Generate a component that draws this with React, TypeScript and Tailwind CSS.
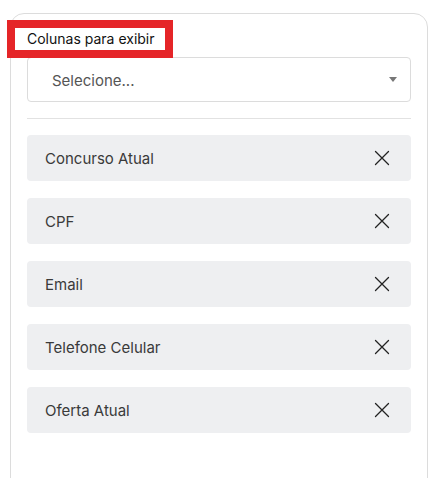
import React from "react";

const items = ["Concurso Atual", "CPF", "Email", "Telefone Celular", "Oferta Atual"];

function XIcon() {
  return (
    <svg width="16" height="16" viewBox="0 0 16 16" fill="none" stroke="#222" strokeWidth="1.3" strokeLinecap="round">
      <path d="M1.5 1.5 L14.5 14.5 M14.5 1.5 L1.5 14.5" />
    </svg>
  );
}

export default function App() {
  return (
    <div className="w-[432px] h-[478px] bg-white overflow-hidden relative" style={{ fontFamily: "Inter, 'Noto Sans', sans-serif" }}>
      <div className="ml-[10px] mt-[13px] w-[418px] h-[500px] border border-[#dcdcdc] rounded-[14px] px-4 pt-[43px]">
        <div className="h-[45px] border border-[#dcdcdc] rounded-[4px] flex items-center justify-between pl-6 pr-[13px]">
          <span className="text-[15px] text-[#555] pt-[3px]">Selecione...</span>
          <svg width="8" height="5" viewBox="0 0 8 5"><path d="M0 0 H8 L4 5 Z" fill="#777" /></svg>
        </div>
        <div className="h-px bg-[#e2e2e2] mt-[16px] mb-[16px]" />
        <div className="flex flex-col gap-[17px]">
          {items.map((t) => (
            <div key={t} className="h-[46px] bg-[#eeeff1] rounded-[4px] flex items-center justify-between pl-[18px] pr-[21px]">
              <span className="text-[15px] text-[#3a3a3a] pt-[2px]">{t}</span>
              <XIcon />
            </div>
          ))}
        </div>
      </div>
      <div className="absolute left-[7px] top-[20px] w-[166px] h-[38px] border-[8px] border-[#e52528] bg-white flex items-center pl-[12px]">
        <span className="text-[14px] text-[#111] leading-none whitespace-nowrap">Colunas para exibir</span>
      </div>
    </div>
  );
}
